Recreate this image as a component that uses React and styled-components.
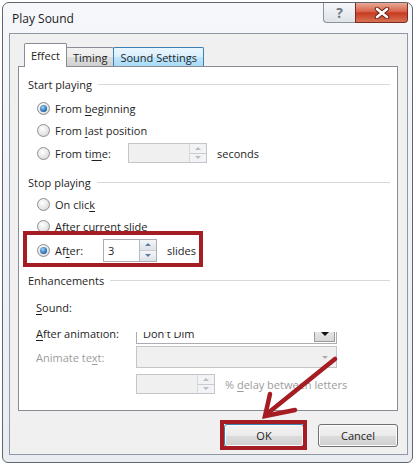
import React from 'react';
import styled, {createGlobalStyle} from 'styled-components';

const GlobalStyle = createGlobalStyle`
    body {
        margin: 0;
        background: #fff;
        font-family: "Open Sans", "DejaVu Sans", sans-serif;
        font-size: 11px;
        color: #1e1e1e;
    }
`;

const RED = '#a51d22';

const Page = styled.div`
    position: relative;
    width: 419px;
    height: 467px;
    box-sizing: border-box;
    padding: 2px 0 0 2px;
    overflow: hidden;
`;

const Window = styled.div`
    width: 411px;
    height: 461px;
    box-sizing: border-box;
    border: 1px solid #5f6670;
    border-radius: 7px 7px 6px 6px;
    background: linear-gradient(#f5f7fa, #e9edf2);
    display: flex;
    flex-direction: column;
    padding: 0 4px 7px 6px;
`;

const TitleBar = styled.div`
    height: 30px;
    display: flex;
    align-items: flex-start;
    justify-content: space-between;
    flex: none;
`;

const Title = styled.div`
    font-size: 12px;
    line-height: 16px;
    margin: 8px 0 0 3px;
    color: #1b1b1b;
`;

const CaptionButtons = styled.div`
    display: flex;
    height: 20px;
`;

const HelpButton = styled.div`
    width: 32px;
    box-sizing: border-box;
    border: 1px solid #8a94a1;
    border-top: none;
    border-right: none;
    border-radius: 0 0 0 4px;
    background: linear-gradient(#f4f6f9, #dfe4ea);
    display: flex;
    align-items: center;
    justify-content: center;
    color: #6d7682;
    font-size: 14px;
    font-weight: bold;
    line-height: 1;
`;

const CloseButton = styled.div`
    width: 53px;
    box-sizing: border-box;
    border: 1px solid #7c2b1f;
    border-top: none;
    border-radius: 0 0 4px 0;
    background: linear-gradient(#e9a897, #d8634a 45%, #c73a22 52%, #d77253);
    display: flex;
    align-items: center;
    justify-content: center;
`;

const Client = styled.div`
    flex: 1;
    background: #f0f0f0;
    border: 1px solid #8f99a5;
    display: flex;
    flex-direction: column;
    padding: 9px 9px 0 8px;
`;

const TabStrip = styled.div`
    display: flex;
    align-items: flex-end;
    height: 24px;
    padding-left: 6px;
    margin-bottom: -1px;
`;

const Tab = styled.div`
    height: ${p => p.$selected ? 24 : 20}px;
    box-sizing: border-box;
    padding: 0 6px;
    display: flex;
    align-items: center;
    border: 1px solid ${p => p.$hover ? '#3c7fb1' : '#898c95'};
    border-bottom: none;
    margin-left: ${p => p.$first ? 0 : -1}px;
    border-radius: 2px 2px 0 0;
    background: ${p => p.$selected ? '#fff'
            : p.$hover ? 'linear-gradient(#eaf6fd, #d9f0fc 50%, #bee6fd 50%, #a7d9f5)'
                    : 'linear-gradient(#f2f2f2, #ebebeb 50%, #dddddd 50%, #cfcfcf)'};
    position: ${p => p.$selected ? 'relative' : 'static'};
    z-index: ${p => p.$selected ? 2 : 'auto'};
`;

const Panel = styled.div`
    position: relative;
    z-index: 1;
    height: 345px;
    box-sizing: border-box;
    border: 1px solid #898c95;
    background: #fff;
    padding-top: 6px;
    flex: none;
`;

const GroupHeader = styled.div`
    display: flex;
    align-items: center;
    gap: 6px;
    height: 22px;
    padding: 0 7px 0 9px;
    margin-top: ${p => p.$mt || 0}px;

    &::after {
        content: '';
        flex: 1;
        height: 1px;
        background: #d5d9dd;
    }
`;

const Row = styled.div`
    position: relative;
    display: flex;
    align-items: center;
    height: 22px;
    padding-left: ${p => p.$indent}px;
    margin-top: ${p => p.$mt || 0}px;
    gap: ${p => p.$gap || 0}px;
    color: ${p => p.$disabled ? '#9c9c9c' : 'inherit'};
`;

const Highlight = styled(Row)`
    &::after {
        content: '';
        position: absolute;
        left: 4px;
        width: 180px;
        top: -8px;
        bottom: -6px;
        box-sizing: border-box;
        border: 4px solid ${RED};
    }
`;

const Radio = styled.span`
    width: 13px;
    height: 13px;
    box-sizing: border-box;
    border-radius: 50%;
    border: 1px solid #8e8f8f;
    background: radial-gradient(circle at 40% 35%, #ffffff, #e4e4e4 60%, #cbcbcb);
    display: flex;
    align-items: center;
    justify-content: center;
    flex: none;

    &::after {
        content: '';
        display: ${p => p.$checked ? 'block' : 'none'};
        width: 7px;
        height: 7px;
        border-radius: 50%;
        background: radial-gradient(circle at 40% 35%, #9fd4fa, #2c74b8 60%, #14477c);
    }
`;

const Label = styled.span`
    width: ${p => p.$w ? p.$w + 'px' : 'auto'};
    margin-left: ${p => p.$ml || 0}px;
    flex: none;
`;

const Spin = styled.div`
    width: ${p => p.$w}px;
    height: ${p => p.$h || 20}px;
    box-sizing: border-box;
    border: 1px solid ${p => p.$disabled ? '#c2c6cb' : '#abadb3'};
    background: ${p => p.$disabled ? '#f0f0f0' : '#fff'};
    display: flex;
    align-items: stretch;
    flex: none;
`;

const SpinValue = styled.span`
    flex: 1;
    padding-left: 4px;
    display: flex;
    align-items: center;
`;

const SpinButtons = styled.div`
    width: 16px;
    display: flex;
    flex-direction: column;
    border-left: 1px solid ${p => p.$disabled ? '#d6d9dc' : '#b9bcc1'};
`;

const SpinHalf = styled.div`
    flex: 1;
    display: flex;
    align-items: center;
    justify-content: center;
    background: ${p => p.$disabled ? '#f2f3f4' : 'linear-gradient(#f4f6f8, #dde2e8)'};
    border-top: ${p => p.$down ? '1px solid #c9ccd0' : 'none'};

    &::after {
        content: '';
        border-left: 3px solid transparent;
        border-right: 3px solid transparent;
        border-${p => p.$down ? 'top' : 'bottom'}: 3px solid ${p => p.$disabled ? '#b8bcc2' : '#5b7fa3'};
    }
`;

const Select = styled.div`
    width: 201px;
    height: 22px;
    box-sizing: border-box;
    border: 1px solid ${p => p.$disabled ? '#c2c6cb' : '#abadb3'};
    background: ${p => p.$disabled ? '#f0f0f0' : '#fff'};
    display: flex;
    align-items: stretch;
    flex: none;
`;

const SelectText = styled.span`
    flex: 1;
    padding-left: 6px;
    display: flex;
    align-items: center;
    color: #1e1e1e;
`;

const SelectArrow = styled.div`
    width: 19px;
    margin: 1px;
    display: flex;
    align-items: center;
    justify-content: center;
    background: ${p => p.$disabled ? 'transparent' : 'linear-gradient(#f0f0f0, #d8d8d8)'};
    border: 1px solid ${p => p.$disabled ? 'transparent' : '#9a9a9a'};

    &::after {
        content: '';
        border-left: ${p => p.$disabled ? 3 : 5}px solid transparent;
        border-right: ${p => p.$disabled ? 3 : 5}px solid transparent;
        border-top: ${p => p.$disabled ? 3 : 5}px solid ${p => p.$disabled ? '#a9acb1' : '#111'};
    }
`;

const ButtonRow = styled.div`
    display: flex;
    justify-content: flex-end;
    gap: 14px;
    margin-top: 13px;
`;

const DefaultWrap = styled.div`
    position: relative;

    &::after {
        content: '';
        position: absolute;
        left: -4px;
        right: -3px;
        top: -4px;
        bottom: -3px;
        border: 4px solid ${RED};
    }
`;

const Button = styled.div`
    width: 80px;
    height: 23px;
    box-sizing: border-box;
    border: 1px solid ${p => p.$default ? '#3c7fb1' : '#707070'};
    border-radius: 3px;
    box-shadow: inset 0 0 0 1px #fcfcfc;
    background: linear-gradient(#f3f3f3, #ebebeb 50%, #dddddd 50%, #cfcfcf);
    display: flex;
    align-items: center;
    justify-content: center;
`;

const Overlay = styled.svg`
    position: absolute;
    left: 0;
    top: 0;
    pointer-events: none;
    z-index: 5;
`;

const U = styled.u`
    text-decoration-thickness: 1px;
    text-underline-offset: 2px;
`;

function Spinner({width, height, value, disabled}) {
    return (
        <Spin $w={width} $h={height} $disabled={disabled}>
            <SpinValue>{value}</SpinValue>
            <SpinButtons $disabled={disabled}>
                <SpinHalf $disabled={disabled}/>
                <SpinHalf $down $disabled={disabled}/>
            </SpinButtons>
        </Spin>
    );
}

export default function App() {
    return (
        <Page>
            <GlobalStyle/>
            <Window>
                <TitleBar>
                    <Title>Play Sound</Title>
                    <CaptionButtons>
                        <HelpButton>?</HelpButton>
                        <CloseButton>
                            <svg width="16" height="12" viewBox="0 0 16 12">
                                <path d="M3 2 L13 10 M13 2 L3 10" stroke="#6b2014" strokeWidth="4.5" strokeLinecap="round"/>
                                <path d="M3 2 L13 10 M13 2 L3 10" stroke="#fff" strokeWidth="2.6" strokeLinecap="round"/>
                            </svg>
                        </CloseButton>
                    </CaptionButtons>
                </TitleBar>
                <Client>
                    <TabStrip>
                        <Tab $selected $first>Effect</Tab>
                        <Tab>Timing</Tab>
                        <Tab $hover>Sound Settings</Tab>
                    </TabStrip>
                    <Panel>
                        <GroupHeader>Start playing</GroupHeader>
                        <Row $indent={18} $gap={5} $mt={2}>
                            <Radio $checked/>
                            <Label>From <U>b</U>eginning</Label>
                        </Row>
                        <Row $indent={18} $gap={5}>
                            <Radio/>
                            <Label>From <U>l</U>ast position</Label>
                        </Row>
                        <Row $indent={18} $gap={5} $mt={1}>
                            <Radio/>
                            <Label $w={68}>From ti<U>m</U>e:</Label>
                            <Spinner width={79} disabled/>
                            <Label $ml={5}>seconds</Label>
                        </Row>

                        <GroupHeader $mt={7}>Stop playing</GroupHeader>
                        <Row $indent={18} $gap={5}>
                            <Radio/>
                            <Label>On clic<U>k</U></Label>
                        </Row>
                        <Row $indent={18} $gap={5}>
                            <Radio/>
                            <Label>After current slide</Label>
                        </Row>
                        <Highlight $indent={18} $gap={5} $mt={2}>
                            <Radio $checked/>
                            <Label $w={43}>Af<U>t</U>er:</Label>
                            <Spinner width={54} height={23} value="3"/>
                            <Label $ml={5}>slides</Label>
                        </Highlight>

                        <GroupHeader $mt={8}>Enhancements</GroupHeader>
                        <Row $indent={17} $mt={5}>
                            <Label><U>S</U>ound:</Label>
                        </Row>
                        <Row $indent={17} $mt={4}>
                            <Label $w={100}><U>A</U>fter animation:</Label>
                            <Select>
                                <SelectText>Don't Dim</SelectText>
                                <SelectArrow/>
                            </Select>
                        </Row>
                        <Row $indent={17} $mt={2} $disabled>
                            <Label $w={100}>Animate te<U>x</U>t:</Label>
                            <Select $disabled>
                                <SelectText/>
                                <SelectArrow $disabled/>
                            </Select>
                        </Row>
                        <Row $indent={117} $mt={5} $gap={10} $disabled>
                            <Spinner width={79} disabled/>
                            <Label>% <U>d</U>elay between letters</Label>
                        </Row>
                    </Panel>
                    <ButtonRow>
                        <DefaultWrap>
                            <Button $default>OK</Button>
                        </DefaultWrap>
                        <Button>Cancel</Button>
                    </ButtonRow>
                </Client>
            </Window>
            <Overlay width="419" height="467" viewBox="0 0 419 467">
                <rect x="92" y="292" width="304" height="40" fill="#fff"/>
                <path d="M335 359 L268 413" stroke={RED} strokeWidth="4.5" strokeLinecap="round"/>
                <path d="M270 394 L265 416 L295 410" fill="none" stroke={RED} strokeWidth="4.5"
                      strokeLinejoin="miter" strokeLinecap="round"/>
            </Overlay>
        </Page>
    );
}
